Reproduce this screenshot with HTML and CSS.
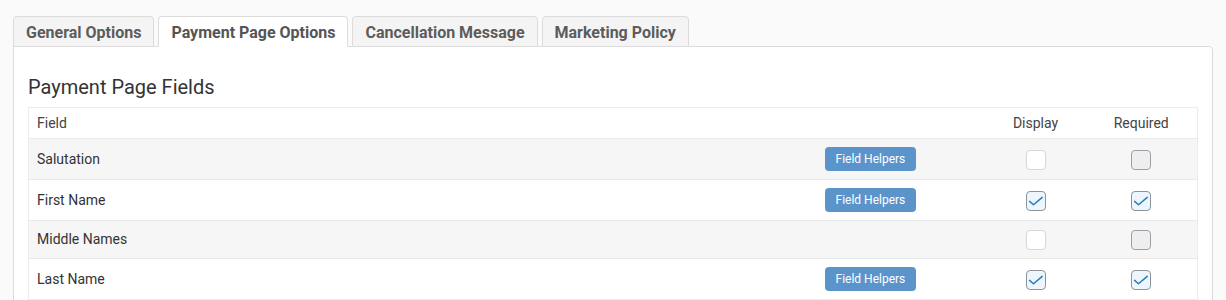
FILE: index.html
```html
<!DOCTYPE html>
<html lang="en">
<head>
<meta charset="utf-8">
<title>Payment Page Options</title>
<link rel="stylesheet" href="styles.css">
</head>
<body>
<div class="page">
  <ul class="tabs">
    <li class="tab">General Options</li>
    <li class="tab active">Payment Page Options</li>
    <li class="tab">Cancellation Message</li>
    <li class="tab">Marketing Policy</li>
  </ul>
  <div class="panel">
    <h3 class="title">Payment Page Fields</h3>
    <table class="fields">
      <colgroup>
        <col>
        <col class="c-helper">
        <col class="c-display">
        <col class="c-required">
      </colgroup>
      <thead>
        <tr>
          <th class="left">Field</th>
          <th></th>
          <th>Display</th>
          <th>Required</th>
        </tr>
      </thead>
      <tbody>
        <tr class="odd">
          <td>Salutation</td>
          <td><span class="btn">Field Helpers</span></td>
          <td class="ctr"><span class="cb cb-off"></span></td>
          <td class="ctr"><span class="cb cb-dis"></span></td>
        </tr>
        <tr>
          <td>First Name</td>
          <td><span class="btn">Field Helpers</span></td>
          <td class="ctr"><span class="cb cb-on"><svg viewBox="0 0 18 18" width="18" height="18"><polyline points="2.6,9.4 6.5,12.7 15.2,5.4" fill="none" stroke="#2c7bb3" stroke-width="1.5" stroke-linecap="round" stroke-linejoin="round"/></svg></span></td>
          <td class="ctr"><span class="cb cb-on"><svg viewBox="0 0 18 18" width="18" height="18"><polyline points="2.6,9.4 6.5,12.7 15.2,5.4" fill="none" stroke="#2c7bb3" stroke-width="1.5" stroke-linecap="round" stroke-linejoin="round"/></svg></span></td>
        </tr>
        <tr class="odd">
          <td>Middle Names</td>
          <td></td>
          <td class="ctr"><span class="cb cb-off"></span></td>
          <td class="ctr"><span class="cb cb-dis"></span></td>
        </tr>
        <tr>
          <td>Last Name</td>
          <td><span class="btn">Field Helpers</span></td>
          <td class="ctr"><span class="cb cb-on"><svg viewBox="0 0 18 18" width="18" height="18"><polyline points="2.6,9.4 6.5,12.7 15.2,5.4" fill="none" stroke="#2c7bb3" stroke-width="1.5" stroke-linecap="round" stroke-linejoin="round"/></svg></span></td>
          <td class="ctr"><span class="cb cb-on"><svg viewBox="0 0 18 18" width="18" height="18"><polyline points="2.6,9.4 6.5,12.7 15.2,5.4" fill="none" stroke="#2c7bb3" stroke-width="1.5" stroke-linecap="round" stroke-linejoin="round"/></svg></span></td>
        </tr>
      </tbody>
    </table>
  </div>
</div>
</body>
</html>
```

FILE: styles.css
```css
html, body {
  margin: 0;
  padding: 0;
  background: #fafafa;
  font-family: Roboto, "Liberation Sans", Arial, sans-serif;
  color: #333;
}

.page {
  padding: 16px 13px;
}

.tabs {
  list-style: none;
  margin: 0 0 -1px 0;
  padding: 0;
  display: flex;
  align-items: flex-end;
  gap: 4px;
  position: relative;
  z-index: 1;
}

.tab {
  font-size: 16px;
  font-weight: 700;
  line-height: 19px;
  color: #5c5c5c;
  padding: 6px 12px 4px;
  background: #f4f4f4;
  border: 1px solid #dcdcdc;
  border-radius: 4px 4px 0 0;
}

.tab.active {
  background: #fff;
  border-bottom-color: #fff;
  color: #555;
}

.panel {
  background: #fff;
  border: 1px solid #dcdcdc;
  border-radius: 0 4px 0 0;
  padding: 14px;
}

.title {
  margin: 15px 0 9px;
  font-size: 20px;
  font-weight: 400;
  line-height: 22px;
  color: #333;
}

.fields {
  width: 100%;
  border-collapse: collapse;
  table-layout: fixed;
  border: 1px solid #ececec;
  font-size: 14px;
  line-height: 21px;
}

.c-helper { width: 169px; }
.c-display { width: 100px; }
.c-required { width: 112px; }

.fields th {
  font-weight: 400;
  color: #444;
  padding: 5px 8px 4px;
  text-align: center;
}

.fields th.left { text-align: left; }

.fields td {
  padding: 8px;
  border-top: 1px solid #e9e9e9;
  vertical-align: middle;
}

.fields td.ctr { text-align: center; }

.fields tr.odd td { background: #f6f6f6; }

.btn {
  display: inline-block;
  vertical-align: middle;
  background: #5b94cb;
  color: #fff;
  font-size: 12px;
  line-height: 14px;
  padding: 5px 11px;
  border-radius: 4px;
}

.cb {
  display: inline-flex;
  align-items: center;
  justify-content: center;
  vertical-align: middle;
  box-sizing: border-box;
  width: 20px;
  height: 20px;
  border-radius: 4px;
}

.cb-off {
  background: #fff;
  border: 1px solid #d7d7d7;
}

.cb-dis {
  background: #eeeeee;
  border: 1px solid #9ba0a6;
}

.cb-on {
  background: #edf6fd;
  border: 1px solid #8b939c;
}

.cb svg { display: block; }
```
